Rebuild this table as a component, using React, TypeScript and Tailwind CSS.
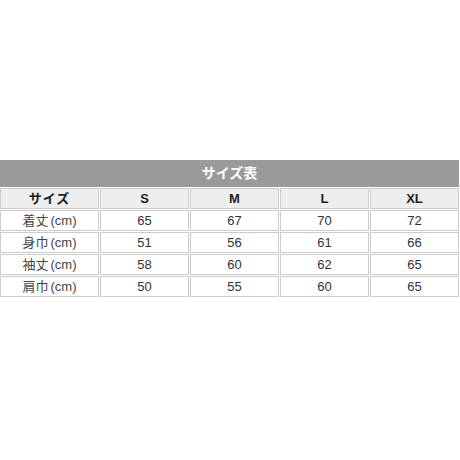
import React from "react";

const cols = ["S", "M", "L", "XL"];
const rows: [string, string[]][] = [
  ["着丈", ["65", "67", "70", "72"]],
  ["身巾", ["51", "56", "61", "66"]],
  ["袖丈", ["58", "60", "62", "65"]],
  ["肩巾", ["50", "55", "60", "65"]],
];

const font = { fontFamily: '"Liberation Sans", "Noto Sans CJK JP", sans-serif' };

export default function App() {
  return (
    <div className="w-[460px] h-[460px] bg-white pt-[160px]" style={font}>
      <div className="w-[459px] h-[27px] bg-[#9a9a9a] text-white font-bold text-[14px] flex items-center justify-center">
        サイズ表
      </div>
      <div className="mt-[1px] w-[459px] grid grid-cols-[99px_89px_89px_89px_89px] gap-[1px] auto-rows-[21px]">
        <div className="border border-[#cccccc] bg-[#eeeeee] flex items-center justify-center font-bold text-[13px] text-[#222] tracking-[1px]">
          サイズ
        </div>
        {cols.map((c) => (
          <div
            key={c}
            className="border border-[#cccccc] bg-[#eeeeee] flex items-center justify-center font-bold text-[13px] text-[#222]"
          >
            {c}
          </div>
        ))}
        {rows.map(([label, vals]) => (
          <React.Fragment key={label}>
            <div className="border border-[#cccccc] flex items-center justify-center text-[13px] text-[#444]">
              <span>{label}</span>
              <span className="ml-[2px]">(cm)</span>
            </div>
            {vals.map((v, i) => (
              <div
                key={i}
                className="border border-[#cccccc] flex items-center justify-center text-[13px] text-[#333]"
              >
                {v}
              </div>
            ))}
          </React.Fragment>
        ))}
      </div>
    </div>
  );
}
